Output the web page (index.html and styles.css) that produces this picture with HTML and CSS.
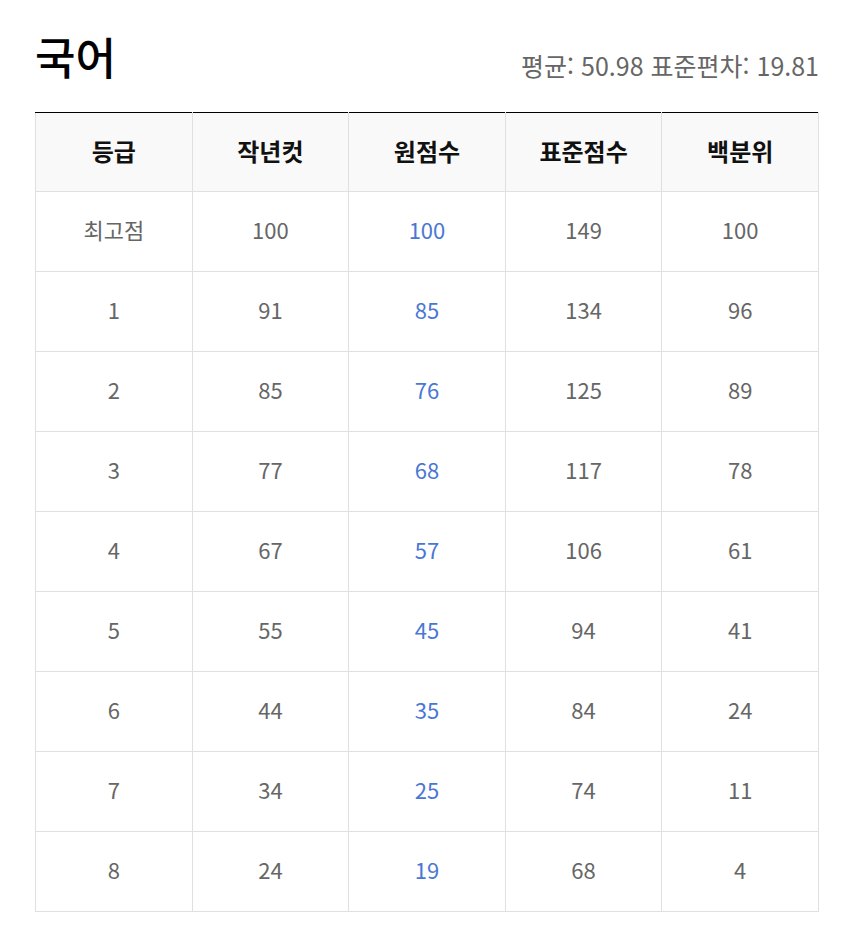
FILE: index.html
```html
<!DOCTYPE html>
<html lang="ko">
<head>
<meta charset="utf-8">
<link rel="stylesheet" href="styles.css">
</head>
<body>
<div class="page">
  <div class="head">
    <h1 class="title">국어</h1>
    <div class="stats">평균: 50.98 표준편차: 19.81</div>
  </div>
  <table class="grade">
    <thead>
      <tr><th>등급</th><th>작년컷</th><th>원점수</th><th>표준점수</th><th>백분위</th></tr>
    </thead>
    <tbody>
      <tr><td>최고점</td><td>100</td><td class="raw">100</td><td>149</td><td>100</td></tr>
      <tr><td>1</td><td>91</td><td class="raw">85</td><td>134</td><td>96</td></tr>
      <tr><td>2</td><td>85</td><td class="raw">76</td><td>125</td><td>89</td></tr>
      <tr><td>3</td><td>77</td><td class="raw">68</td><td>117</td><td>78</td></tr>
      <tr><td>4</td><td>67</td><td class="raw">57</td><td>106</td><td>61</td></tr>
      <tr><td>5</td><td>55</td><td class="raw">45</td><td>94</td><td>41</td></tr>
      <tr><td>6</td><td>44</td><td class="raw">35</td><td>84</td><td>24</td></tr>
      <tr><td>7</td><td>34</td><td class="raw">25</td><td>74</td><td>11</td></tr>
      <tr><td>8</td><td>24</td><td class="raw">19</td><td>68</td><td>4</td></tr>
    </tbody>
  </table>
</div>
</body>
</html>
```

FILE: styles.css
```css
html, body {
  margin: 0;
  padding: 0;
  background: #fff;
}
body {
  font-family: "Noto Sans CJK KR", "Noto Sans", sans-serif;
  color: #111;
}
.page {
  padding: 26px 33px 0 35px;
}
.head {
  display: flex;
  justify-content: space-between;
  align-items: flex-end;
  padding-bottom: 26px;
}
.title {
  margin: 0;
  font-size: 44px;
  font-weight: 500;
  line-height: 60px;
  color: #000;
}
.stats {
  font-size: 25px;
  color: #666;
  line-height: 34px;
  padding-bottom: 4px;
}
.grade {
  width: 100%;
  border-collapse: collapse;
  table-layout: fixed;
  border-top: 1px solid #000;
}
.grade th, .grade td {
  border: 1px solid #e0e0e0;
  text-align: center;
  vertical-align: middle;
  line-height: 30px;
}
.grade thead tr th {
  height: 76px;
  padding: 0 0 2px;
  border-top: 1px solid #000;
  background: #f9f9f9;
  font-size: 24px;
  font-weight: 700;
  color: #111;
}
.grade td {
  height: 74px;
  padding: 0 0 5px;
  font-size: 22px;
  color: #666;
}
.grade td.raw {
  color: #4a77d4;
}
```
